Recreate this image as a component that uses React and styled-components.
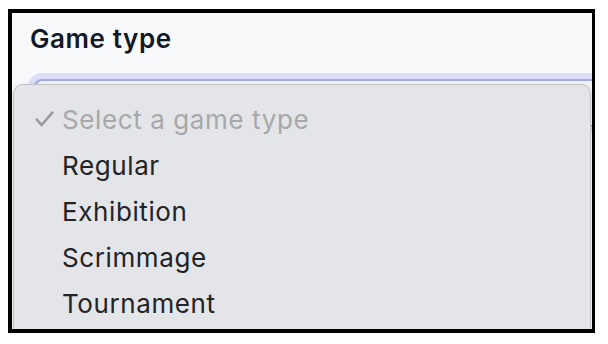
import React from 'react';
import styled, { createGlobalStyle } from 'styled-components';

const GlobalStyle = createGlobalStyle`
  html, body {
    margin: 0;
    padding: 0;
    background: #ffffff;
  }
  body {
    font-family: Inter, "Noto Sans", "Liberation Sans", sans-serif;
  }
`;

const Page = styled.div`
  padding: 9px 0 0 8px;
`;

const Frame = styled.div`
  position: relative;
  box-sizing: border-box;
  width: 587px;
  height: 324px;
  border: 4px solid #000;
  border-right-width: 3px;
  background: #f8f9fa;
  overflow: hidden;
  padding: 10px 0 0 18px;
`;

const Label = styled.div`
  font-size: 26px;
  line-height: 32px;
  font-weight: 600;
  color: #111827;
  letter-spacing: 0.6px;
`;

const SelectBox = styled.div`
  margin: 24px 0 0 4px;
  width: 620px;
  height: 48px;
  box-sizing: border-box;
  border: 2px solid #a5a9ec;
  border-radius: 8px;
  background: #f3f4f6;
  box-shadow: 0 0 0 6px #dcdff7;
`;

const Menu = styled.ul`
  position: absolute;
  top: 71px;
  left: 1px;
  right: 1px;
  height: 270px;
  margin: 0;
  padding: 11px 0 0;
  list-style: none;
  box-sizing: border-box;
  background: #e3e5e8;
  border: 1px solid #c3c4c7;
  border-radius: 10px;
  box-shadow: 0 2px 6px rgba(0, 0, 0, 0.12);
`;

const Option = styled.li`
  display: flex;
  align-items: center;
  height: 46px;
  padding-left: 21px;
  font-size: 26px;
  letter-spacing: 0.6px;
  color: ${(p) => (p.$placeholder ? '#a7a8aa' : '#222326')};
`;

const CheckSlot = styled.span`
  display: flex;
  align-items: center;
  width: 27px;
  height: 46px;
`;

const Check = () => (
  <svg width="19" height="16" viewBox="0 0 19 16" fill="none">
    <path
      d="M1.8 8.6 L6.6 14 L17.4 1.6"
      stroke="#9a9b9d"
      strokeWidth="2.6"
      strokeLinecap="round"
      strokeLinejoin="round"
    />
  </svg>
);

const options = [
  { label: 'Select a game type', placeholder: true, checked: true },
  { label: 'Regular' },
  { label: 'Exhibition' },
  { label: 'Scrimmage' },
  { label: 'Tournament' },
];

export default function App() {
  return (
    <>
      <GlobalStyle />
      <Page>
        <Frame>
          <Label>Game type</Label>
          <SelectBox />
          <Menu>
            {options.map((o) => (
              <Option key={o.label} $placeholder={o.placeholder}>
                <CheckSlot>{o.checked && <Check />}</CheckSlot>
                {o.label}
              </Option>
            ))}
          </Menu>
        </Frame>
      </Page>
    </>
  );
}
